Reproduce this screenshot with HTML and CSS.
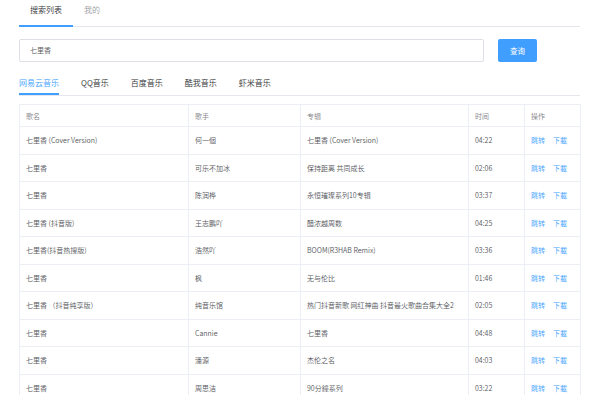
FILE: index.html
```html
<!DOCTYPE html>
<html lang="zh-CN">
<head>
<meta charset="utf-8">
<link rel="stylesheet" href="styles.css">
</head>
<body>
<div class="page">
  <div class="top-tabs">
    <div class="top-tab active">搜索列表</div>
    <div class="top-tab">我的</div>
  </div>
  <div class="search">
    <div class="input">七里香</div>
    <button class="btn">查询</button>
  </div>
  <div class="src-tabs">
    <div class="src-tab active">网易云音乐</div>
    <div class="src-tab">QQ音乐</div>
    <div class="src-tab">百度音乐</div>
    <div class="src-tab">酷我音乐</div>
    <div class="src-tab">虾米音乐</div>
  </div>
  <table class="songs">
    <colgroup>
      <col class="c1"><col class="c2"><col class="c3"><col class="c4"><col class="c5">
    </colgroup>
    <thead>
      <tr><th>歌名</th><th>歌手</th><th>专辑</th><th>时间</th><th>操作</th></tr>
    </thead>
    <tbody>
      <tr><td>七里香 (Cover Version)</td><td>何一個</td><td>七里香 (Cover Version)</td><td>04:22</td><td class="ops"><a>跳转</a><a>下載</a></td></tr>
      <tr><td>七里香</td><td>可乐不加冰</td><td>保持距离 共同成长</td><td>02:06</td><td class="ops"><a>跳转</a><a>下載</a></td></tr>
      <tr><td>七里香</td><td>陈润桦</td><td>永恒璀璨系列10专辑</td><td>03:37</td><td class="ops"><a>跳转</a><a>下載</a></td></tr>
      <tr><td>七里香 (抖音版)</td><td>王志鹏吖</td><td>醋浓越周数</td><td>04:25</td><td class="ops"><a>跳转</a><a>下載</a></td></tr>
      <tr><td>七里香(抖音热搜版)</td><td>浩然吖</td><td>BOOM(R3HAB Remix)</td><td>03:36</td><td class="ops"><a>跳转</a><a>下載</a></td></tr>
      <tr><td>七里香</td><td>枫</td><td>无与伦比</td><td>01:46</td><td class="ops"><a>跳转</a><a>下載</a></td></tr>
      <tr><td>七里香 （抖音纯享版）</td><td>纯音乐馆</td><td>热门抖音新歌 网红神曲 抖音最火歌曲合集大全2</td><td>02:05</td><td class="ops"><a>跳转</a><a>下載</a></td></tr>
      <tr><td>七里香</td><td>Cannie</td><td>七里香</td><td>04:48</td><td class="ops"><a>跳转</a><a>下載</a></td></tr>
      <tr><td>七里香</td><td>潘源</td><td>杰伦之名</td><td>04:03</td><td class="ops"><a>跳转</a><a>下載</a></td></tr>
      <tr><td>七里香</td><td>周思洁</td><td>90分鐘系列</td><td>03:22</td><td class="ops"><a>跳转</a><a>下載</a></td></tr>
    </tbody>
  </table>
</div>
</body>
</html>
```
FILE: styles.css
```css
html, body {
  margin: 0;
  padding: 0;
  background: #fff;
  font-family: "Noto Sans CJK SC", "Noto Sans", sans-serif;
  overflow: hidden;
}
.page {
  width: 561px;
  margin-left: 19px;
}
.top-tabs {
  display: flex;
  height: 26px;
  border-bottom: 1px solid #e4e7ed;
}
.top-tab {
  font-size: 8px;
  line-height: 20px;
  padding: 0 10px 0 11px;
  color: #9a9ca3;
  box-sizing: border-box;
  height: 27px;
  font-weight: 350;
}
.top-tab.active {
  color: #303133;
  border-bottom: 2px solid #409eff;
  width: 54px;
}
.search {
  display: flex;
  margin-top: 12px;
  gap: 14px;
}
.input {
  width: 465px;
  height: 23px;
  box-sizing: border-box;
  border: 1px solid #dcdfe6;
  border-radius: 2px;
  font-size: 7px;
  line-height: 21px;
  padding-left: 10px;
  color: #555;
  font-weight: 350;
}
.btn {
  width: 39px;
  height: 23px;
  border: 0;
  border-radius: 2px;
  background: #409eff;
  color: #fff;
  font-family: inherit;
  font-size: 7.5px;
  padding: 0;
}
.src-tabs {
  display: flex;
  margin-top: 11px;
  height: 22px;
  border-bottom: 1px solid #e4e7ed;
}
.src-tab {
  font-size: 8px;
  line-height: 20px;
  color: #303133;
  margin-right: 22px;
  height: 22px;
  box-sizing: border-box;
  font-weight: 350;
}
.src-tab.active {
  color: #409eff;
  border-bottom: 2px solid #409eff;
}
.songs {
  margin-top: 8px;
  width: 561px;
  border-collapse: collapse;
  table-layout: fixed;
  font-size: 7px;
  color: #55575c;
}
.c1 { width: 169px; }
.c2 { width: 112px; }
.c3 { width: 168px; }
.c4 { width: 56px; }
.c5 { width: 56px; }
.songs th, .songs td {
  border: 1px solid #ebeef5;
  text-align: left;
  padding: 0 0 0 6px;
  white-space: nowrap;
  overflow: hidden;
  font-weight: 350;
}
.songs th {
  height: 21px;
  color: #7f8187;
}
.songs td {
  height: 26.5px;
}
.ops a {
  color: #409eff;
  margin-right: 8px;
}
```
